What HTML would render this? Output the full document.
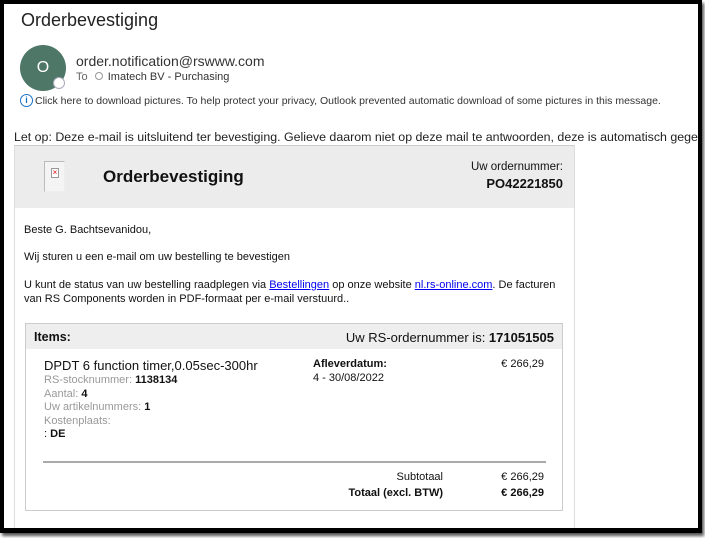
<!DOCTYPE html>
<html><head><style>
*{margin:0;padding:0;box-sizing:border-box}
body{width:705px;height:538px;background:#fff;position:relative;overflow:hidden;font-family:"Liberation Sans",sans-serif;color:#111}
.a{position:absolute;white-space:nowrap}
.frame{position:absolute;left:0;top:0;width:702px;height:533px;border:4px solid #000;border-bottom-width:5px;box-shadow:2px 3px 3px #555;overflow:hidden}
.g{color:#999}
</style></head><body>
<div class="frame">
<div class="a" style="left:17px;top:6px;font-size:18px;color:#222">Orderbevestiging</div>
<div class="a" style="left:16px;top:41px;width:46px;height:46px;border-radius:50%;background:#4e7767;color:#fff;font-size:16px;text-align:center;line-height:46px">O</div>
<div class="a" style="left:49px;top:73px;width:12px;height:12px;border-radius:50%;background:#fff;border:1px solid #aab"></div>
<div class="a" style="left:72px;top:49px;font-size:14px;color:#333">order.notification@rswww.com</div>
<div class="a" style="left:72px;top:67px;font-size:11px;color:#333"><span style="color:#666">To</span> <span style="display:inline-block;width:8px;height:8px;border:1px solid #999;border-radius:50%;margin:0 2px 0 4px"></span> Imatech BV - Purchasing</div>
<div class="a" style="left:16px;top:90px;width:13px;height:13px;border:1.5px solid #1a73c8;border-radius:50%;color:#1a73c8;font-size:9px;font-weight:bold;text-align:center;line-height:10px">i</div>
<div class="a" style="left:31px;top:91px;font-size:10.5px;color:#333">Click here to download pictures. To help protect your privacy, Outlook prevented automatic download of some pictures in this message.</div>
<div class="a" style="left:10px;top:126px;font-size:12.4px;color:#222">Let op: Deze e-mail is uitsluitend ter bevestiging. Gelieve daarom niet op deze mail te antwoorden, deze is automatisch gegenereerd.</div>
<div class="a" style="left:10px;top:141px;width:561px;height:400px;border:1px solid #ddd;border-top-color:#ccc"></div>
<div class="a" style="left:11px;top:142px;width:559px;height:62px;background:#ececec"></div>
<div class="a" style="left:40px;top:157px;width:21px;height:31px;border:1px solid #bbb;border-right-color:#eee;border-bottom-color:#eee;background:#f4f4f4"></div>
<div class="a" style="left:47px;top:164px;width:8px;height:10px;border:1px solid #999;background:#fff;color:#d00;font-size:8px;line-height:8px;text-align:center">×</div>
<div class="a" style="left:99px;top:163px;font-size:17px;font-weight:bold">Orderbevestiging</div>
<div class="a" style="right:135px;top:157px;font-size:11.5px;text-align:right">Uw ordernummer:</div>
<div class="a" style="right:135px;top:172px;font-size:13px;font-weight:bold">PO42221850</div>
<div class="a" style="left:20px;top:220px;font-size:11px">Beste G. Bachtsevanidou,</div>
<div class="a" style="left:20px;top:247px;font-size:11px">Wij sturen u een e-mail om uw bestelling te bevestigen</div>
<div class="a" style="left:20px;top:274px;font-size:11px;line-height:14px">U kunt de status van uw bestelling raadplegen via <span style="color:#00e;text-decoration:underline">Bestellingen</span> op onze website <span style="color:#00e;text-decoration:underline">nl.rs-online.com</span>. De facturen<br>van RS Components worden in PDF-formaat per e-mail verstuurd..</div>
<div class="a" style="left:21px;top:319px;width:538px;height:188px;border:1px solid #ccc"></div>
<div class="a" style="left:22px;top:320px;width:536px;height:25px;background:#eee"></div>
<div class="a" style="left:30px;top:326px;font-size:12.5px;font-weight:bold">Items:</div>
<div class="a" style="right:144px;top:326px;font-size:13px">Uw RS-ordernummer is: <b>171051505</b></div>
<div class="a" style="left:40px;top:354px;font-size:13px">DPDT 6 function timer,0.05sec-300hr</div>
<div class="a" style="left:40px;top:370px;font-size:11px;line-height:13.5px"><span class="g">RS-stocknummer:</span> <b>1138134</b><br><span class="g">Aantal:</span> <b>4</b><br><span class="g">Uw artikelnummers:</span> <b>1</b><br><span class="g">Kostenplaats:</span><br>: <b>DE</b></div>
<div class="a" style="left:309px;top:354px;font-size:11px;line-height:13.5px"><b>Afleverdatum:</b><br>4 - 30/08/2022</div>
<div class="a" style="right:154px;top:354px;font-size:11px">€ 266,29</div>
<div class="a" style="left:39px;top:457px;width:503px;height:2px;background:#aaa"></div>
<div class="a" style="right:255px;top:467px;font-size:11px">Subtotaal</div>
<div class="a" style="right:154px;top:467px;font-size:11px">€ 266,29</div>
<div class="a" style="right:255px;top:483px;font-size:11px;font-weight:bold">Totaal (excl. BTW)</div>
<div class="a" style="right:154px;top:483px;font-size:11px;font-weight:bold">€ 266,29</div>
</div>
</body></html>
